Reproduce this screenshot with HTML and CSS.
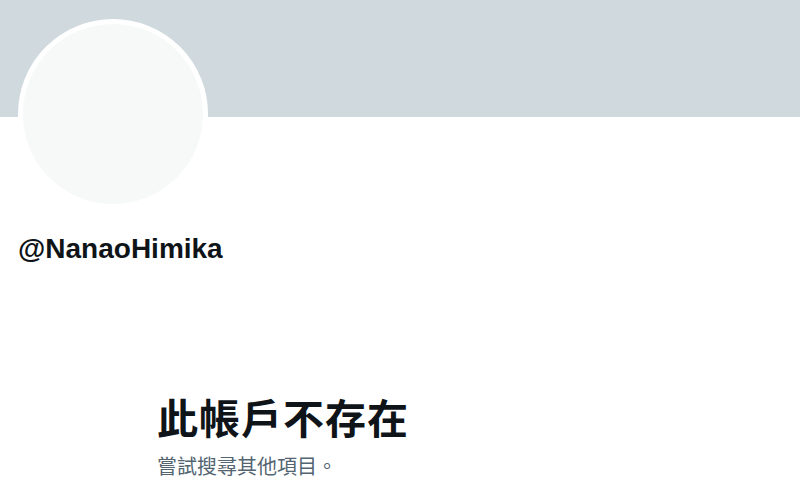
FILE: index.html
```html
<!DOCTYPE html>
<html lang="zh-Hant">
<head>
<meta charset="utf-8">
<link rel="stylesheet" href="styles.css">
</head>
<body>
<div class="banner"></div>
<div class="profile">
  <div class="avatar"></div>
  <div class="handle">@NanaoHimika</div>
</div>
<div class="empty">
  <div class="title">此帳戶不存在</div>
  <div class="sub">嘗試搜尋其他項目。</div>
</div>
</body>
</html>
```
FILE: styles.css
```css
html, body {
  margin: 0;
  padding: 0;
  background: #ffffff;
  overflow: hidden;
}
body {
  width: 800px;
  height: 486px;
  font-family: "Liberation Sans", "Noto Sans CJK TC", sans-serif;
}
.banner {
  height: 117px;
  background: #cfd9de;
}
.profile {
  padding-left: 18px;
}
.avatar {
  box-sizing: border-box;
  width: 190px;
  height: 190px;
  margin-top: -98px;
  border-radius: 50%;
  border: 5px solid #ffffff;
  background: #f7f9f9;
}
.handle {
  margin-top: 24px;
  font-size: 28px;
  line-height: 32px;
  font-weight: 700;
  color: #0f1419;
}
.empty {
  padding-left: 157px;
  padding-top: 131px;
}
.title {
  font-family: "Noto Sans CJK TC", sans-serif;
  font-size: 41px;
  line-height: 41px;
  font-weight: 700;
  color: #0f1419;
  letter-spacing: 1px;
}
.sub {
  margin-top: 19px;
  font-family: "Noto Sans CJK TC", sans-serif;
  font-size: 20px;
  line-height: 20px;
  color: #536471;
}
```
